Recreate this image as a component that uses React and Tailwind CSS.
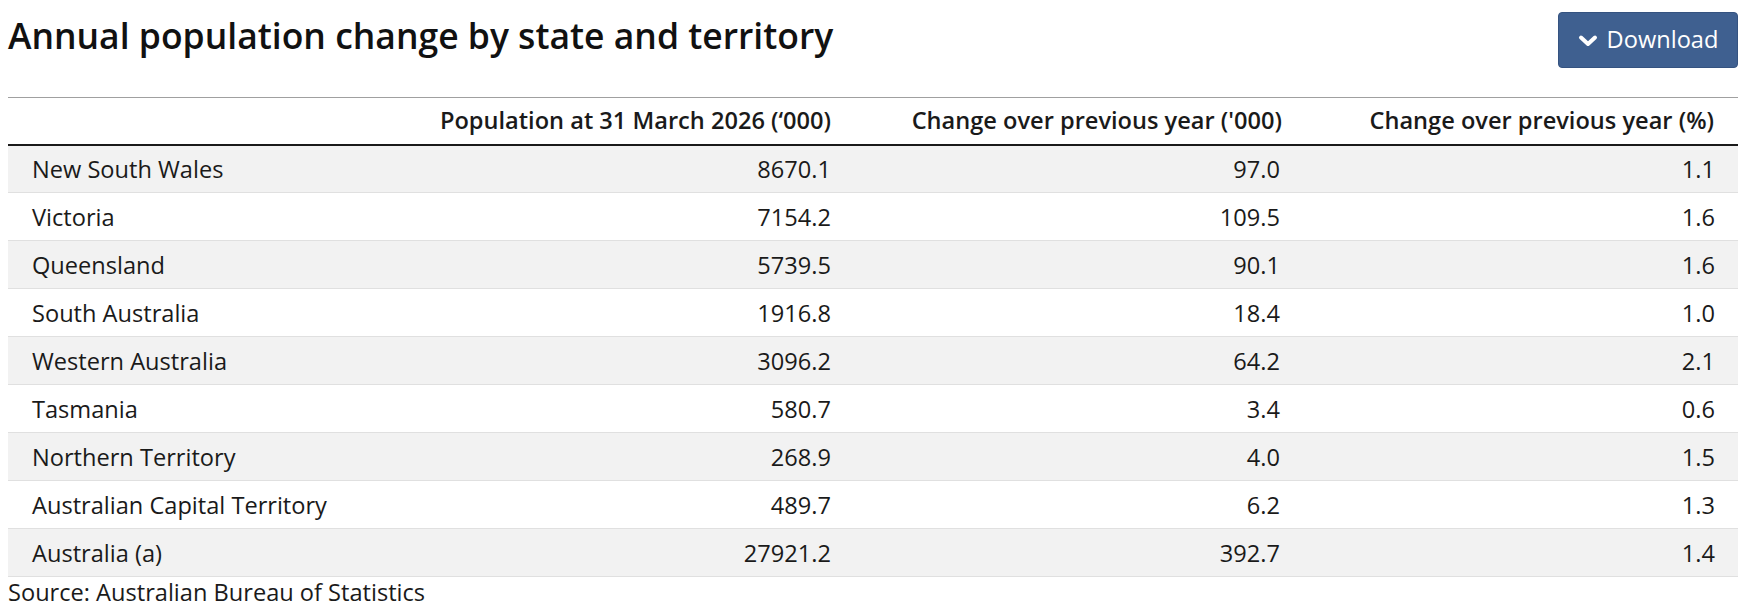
import React from "react";

const rows = [
  ["New South Wales", "8670.1", "97.0", "1.1"],
  ["Victoria", "7154.2", "109.5", "1.6"],
  ["Queensland", "5739.5", "90.1", "1.6"],
  ["South Australia", "1916.8", "18.4", "1.0"],
  ["Western Australia", "3096.2", "64.2", "2.1"],
  ["Tasmania", "580.7", "3.4", "0.6"],
  ["Northern Territory", "268.9", "4.0", "1.5"],
  ["Australian Capital Territory", "489.7", "6.2", "1.3"],
  ["Australia (a)", "27921.2", "392.7", "1.4"],
];

export default function App() {
  return (
    <div className="w-[1746px] h-[608px] bg-white text-[#1a1a1a] overflow-hidden" style={{ fontFamily: '"Open Sans", sans-serif' }}>
      <div className="flex items-start justify-between px-2 pt-3">
        <h1 className="text-[35.5px] font-semibold leading-[44px] mt-[1px] text-[#111]">
          Annual population change by state and territory
        </h1>
        <button className="flex items-center gap-[9px] h-[56px] w-[180px] justify-center rounded-[4px] bg-[#3f6090] border border-[#355380] text-white text-[23.6px]">
          <svg width="20" height="14" viewBox="0 0 20 14" className="mt-[2px]">
            <path d="M3 3.5 L10 10 L17 3.5" fill="none" stroke="white" strokeWidth="4" strokeLinecap="round" strokeLinejoin="round" />
          </svg>
          <span>Download</span>
        </button>
      </div>
      <table className="mx-2 mt-[29px] w-[1730px] table-fixed border-collapse border-t border-[#a0a0a0]">
        <colgroup>
          <col className="w-[400px]" />
          <col className="w-[447px]" />
          <col className="w-[452px]" />
          <col className="w-[431px]" />
        </colgroup>
        <thead>
          <tr className="h-[47px] border-b-2 border-[#1a1a1a]">
            <th></th>
            <th className="text-right pr-6 text-[23.6px] font-semibold">Population at 31 March 2026 (‘000)</th>
            <th className="text-right pr-[25px] text-[23.6px] font-semibold">Change over previous year ('000)</th>
            <th className="text-right pr-6 text-[23.6px] font-semibold">Change over previous year (%)</th>
          </tr>
        </thead>
        <tbody>
          {rows.map((r, i) => (
            <tr key={r[0]} className={"h-[48px] border-b border-[#e0e0e0] " + (i % 2 === 0 ? "bg-[#f2f2f2]" : "bg-white")}>
              <td className="pl-6 pt-[2px] text-[23.6px]">{r[0]}</td>
              <td className="pr-6 pt-[2px] text-right text-[23.6px]">{r[1]}</td>
              <td className="pr-[27px] pt-[2px] text-right text-[23.6px]">{r[2]}</td>
              <td className="pr-[23px] pt-[2px] text-right text-[23.6px]">{r[3]}</td>
            </tr>
          ))}
        </tbody>
      </table>
      <div className="px-2 text-[23.6px] leading-[30px]">Source: Australian Bureau of Statistics</div>
    </div>
  );
}
